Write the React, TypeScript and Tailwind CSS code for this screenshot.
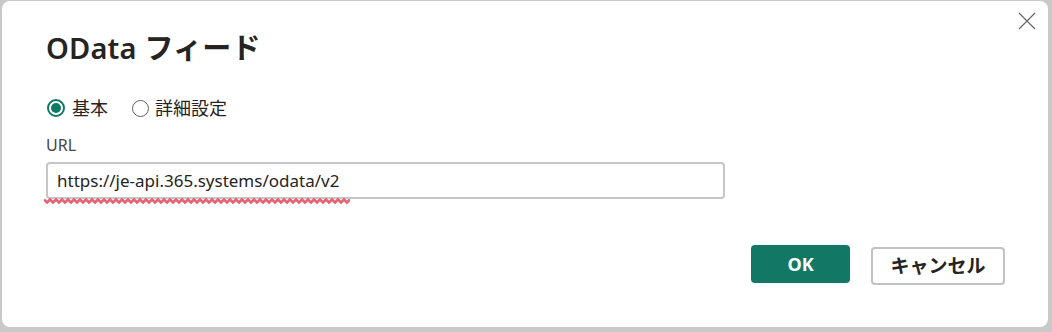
import React from "react";

const font = { fontFamily: '"Noto Sans", "Noto Sans CJK JP", sans-serif' };

function Squiggle() {
  const pts: string[] = [];
  for (let i = 0; i <= 102; i++) {
    const x = i * 3;
    const y = i % 2 === 0 ? 1.5 : 4.5;
    pts.push(`${x},${y}`);
  }
  return (
    <svg width="306" height="6" viewBox="0 0 306 6" className="block">
      <polyline points={pts.join(" ")} fill="none" stroke="#e63950" strokeWidth="2.6" strokeOpacity="0.8" />
    </svg>
  );
}

export default function App() {
  return (
    <div className="w-[1052px] h-[332px] bg-[#c9c9c9] pl-[2px] pt-[1px] overflow-hidden" style={font}>
      <div className="relative w-[1046px] h-[326px] bg-white rounded-[8px] flex flex-col pl-[44px]">
        <button className="absolute right-[12px] top-[11px] w-[18px] h-[18px] flex items-center justify-center">
          <svg width="18" height="18" viewBox="0 0 18 18">
            <path d="M1 1 L17 17 M17 1 L1 17" stroke="#6b6b6b" strokeWidth="1.3" fill="none" />
          </svg>
        </button>
        <h1 className="mt-[26px] text-[29px] leading-[41px] font-semibold text-[#252423] tracking-[0.2px]">
          OData <span className="font-bold">フィード</span>
        </h1>
        <div className="mt-[27px] flex items-center h-[26px] text-[18px] text-[#252423]">
          <span className="w-[18px] h-[18px] rounded-full border-[2px] border-[#117865] flex items-center justify-center ml-[1px]">
            <span className="w-[10px] h-[10px] rounded-full bg-[#117865]" />
          </span>
          <span className="ml-[7px]">基本</span>
          <span className="ml-[24px] w-[17px] h-[17px] rounded-full border-[1.5px] border-[#616161]" />
          <span className="ml-[6px]">詳細設定</span>
        </div>
        <div className="mt-[12px] text-[16px] leading-[24px] text-[#484644]">URL</div>
        <div className="mt-[5px] relative w-[679px] h-[37px] border-[2px] border-[#c6c6c6] rounded-[4px] flex items-center pl-[9px] text-[17px] text-[#252423]">
          https://je-api.365.systems/odata/v2
          <div className="absolute left-[-4px] top-[34px]">
            <Squiggle />
          </div>
        </div>
        <div className="mt-[46px] flex items-start pl-[705px]">
          <button className="w-[99px] h-[38px] rounded-[4px] bg-[#117865] text-white font-bold text-[18px]">
            OK
          </button>
          <button className="ml-[21px] mt-[2px] w-[134px] h-[38px] rounded-[4px] border-[2px] border-[#c2c2c2] bg-white text-[#252423] font-bold text-[19px]">
            キャンセル
          </button>
        </div>
      </div>
    </div>
  );
}
